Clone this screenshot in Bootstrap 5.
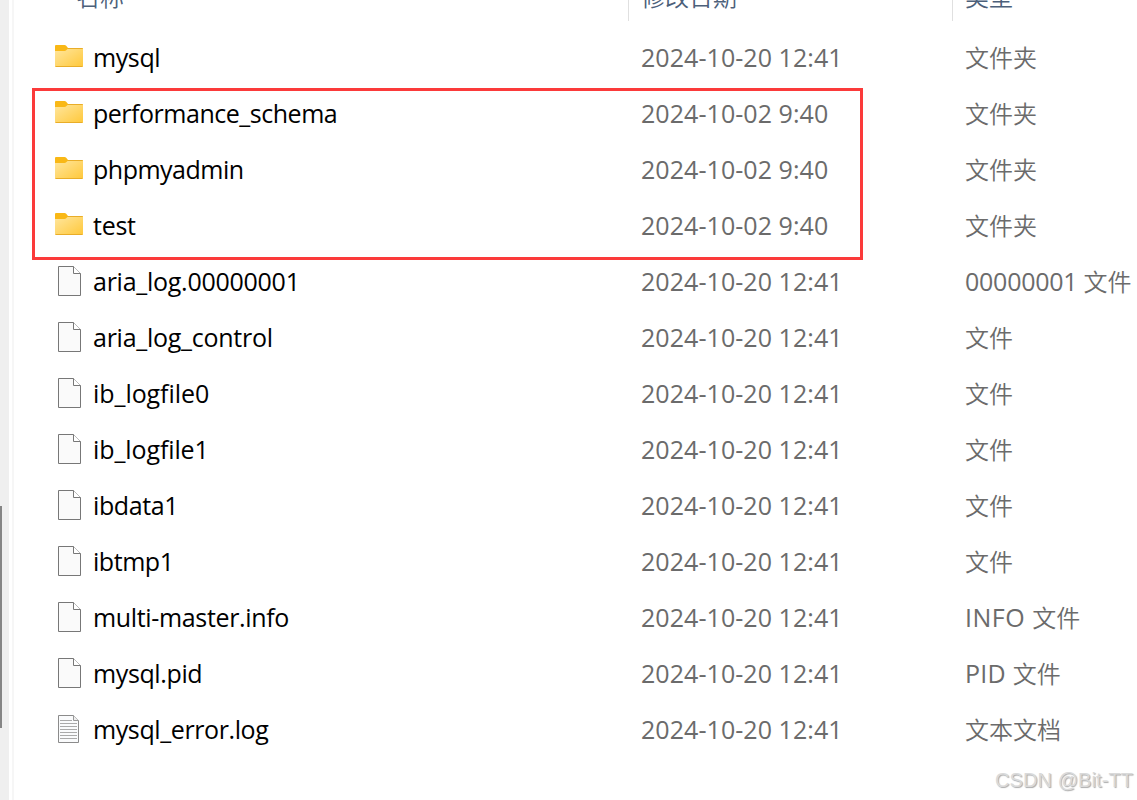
<!DOCTYPE html>
<html lang="zh-CN">
<head>
<meta charset="utf-8">
<title>data</title>
<link href="https://cdn.jsdelivr.net/npm/bootstrap@5.3.0/dist/css/bootstrap.min.css" rel="stylesheet">
<style>
body{font-family:"Open Sans","Noto Sans","Noto Sans CJK SC",sans-serif;font-size:25px;line-height:54px;color:#000;background:#fff}
.gutter{width:9px;background:#efefef;padding-top:506px}
.thumb{width:2px;height:222px;background:#858585}
.files{margin-left:3px;border-left:2px solid #f6f6f6;min-width:0}
.line{display:grid;grid-template-columns:39px 548px 324px 1fr;padding-left:40px;height:56px;white-space:nowrap}
.heads{display:grid;grid-template-columns:615px 324px 1fr;height:30px;color:#4c607a;font-size:24px;white-space:nowrap}
.heads>div{height:21px;line-height:32px;border-right:1px solid #e0e0e0;overflow:hidden}
.heads>div:last-child{border:0}
.heads span{display:block;margin-top:-16px;padding-left:12px}
.heads .first{padding-left:62px}
.when,.kind{color:#6b6b6b}
.when{letter-spacing:.06px}
.num{letter-spacing:-.25px}
.zh{font-family:"Noto Sans CJK SC",sans-serif;font-size:24px;font-weight:350;line-height:1}
.line svg{display:block}
.marked{left:32px;top:88px;width:831px;height:172px;border:3px solid #fb3a3a}
.sign{right:4px;bottom:3px;font:20px/34px "Liberation Sans",sans-serif;letter-spacing:.08px;color:#dadada;text-shadow:1px 1px 1px #aaa}
</style>
<script src="https://cdn.jsdelivr.net/npm/bootstrap@5.3.0/dist/js/bootstrap.bundle.min.js"></script>
</head>
<body>
<svg width="0" height="0" class="position-absolute" aria-hidden="true">
<defs>
<linearGradient id="fold" x1="0" y1="0" x2="1" y2="1"><stop stop-color="#ffe69d"/><stop offset="1" stop-color="#ffc83a"/></linearGradient>
<symbol id="folder" viewBox="0 0 32 56">
<path d="M1 16q0-1 1-1h8.500q1 0 1.700.8L14 18h14q1 0 1 1v5H1z" fill="#f9b816"/>
<path d="M1 21h9.500q1 0 2-1l1-1H29v17q0 1-1 1H2q-1 0-1-1z" fill="url(#fold)"/>
<path d="M1.500 36.500h27M14 18.500h14.500" stroke="#e9ad28" fill="none"/>
</symbol>
<symbol id="blank" viewBox="0 0 32 56">
<path d="M4.500 12.500h15l7 7v22h-22z" fill="#fafafa" stroke="#777"/>
<path d="M19.500 12.500v7h7" fill="#fff" stroke="#777"/>
</symbol>
<symbol id="textdoc" viewBox="0 0 32 56">
<path d="M4.500 13.500h15l5 5v22h-20z" fill="#fafbfc" stroke="#8b8b8b"/>
<path d="M19.500 13.500v5h5" fill="#eee" stroke="#999"/>
<path d="M6 18.500h12M6 21.500h17M6 24.500h17M6 27.500h17M6 30.500h17M6 33.500h17M6 36.500h17" stroke="#aaa"/>
</symbol>
</defs>
</svg>
<main class="d-flex vh-100 overflow-hidden position-relative">
<div class="gutter flex-shrink-0"><div class="thumb"></div></div>
<section class="files flex-grow-1">
<div class="heads"><div><span class="zh first">名称</span></div><div><span class="zh">修改日期</span></div><div><span class="zh">类型</span></div></div>
<div id="rows"></div>
</section>
<div class="marked position-absolute"></div>
<div class="sign position-absolute">CSDN @Bit-TT</div>
</main>
<script>
const late = "2024-10-20 12:41", early = "2024-10-02 9:40";
const zh = t => `<span class="zh">${t}</span>`;
// icon, name, tracking of the name in px, date, kind
const files = [
 ["folder","mysql",-.4,late,zh("文件夹")],
 ["folder","performance_schema",-.48,early,zh("文件夹")],
 ["folder","phpmyadmin",-.5,early,zh("文件夹")],
 ["folder","test",-.25,early,zh("文件夹")],
 ["blank","aria_log.00000001",-.26,late,`<span class="num">00000001 </span>`+zh("文件")],
 ["blank","aria_log_control",-.26,late,zh("文件")],
 ["blank","ib_logfile0",-.06,late,zh("文件")],
 ["blank","ib_logfile1",-.1,late,zh("文件")],
 ["blank","ibdata1",-.4,late,zh("文件")],
 ["blank","ibtmp1",-.45,late,zh("文件")],
 ["blank","multi-master.info",-.34,late,`<span style="letter-spacing:.5px">INFO </span>`+zh("文件")],
 ["blank","mysql.pid",-.38,late,`<span style="letter-spacing:.25px">PID </span>`+zh("文件")],
 ["textdoc","mysql_error.log",-.4,late,zh("文本文档")]
];
document.getElementById("rows").innerHTML = files.map(([icon,name,track,when,kind]) =>
 `<div class="line"><svg width="32" height="56"><use href="#${icon}"/></svg><div style="letter-spacing:${track}px">${name}</div><div class="when">${when}</div><div class="kind">${kind}</div></div>`).join("");
</script>
</body>
</html>
